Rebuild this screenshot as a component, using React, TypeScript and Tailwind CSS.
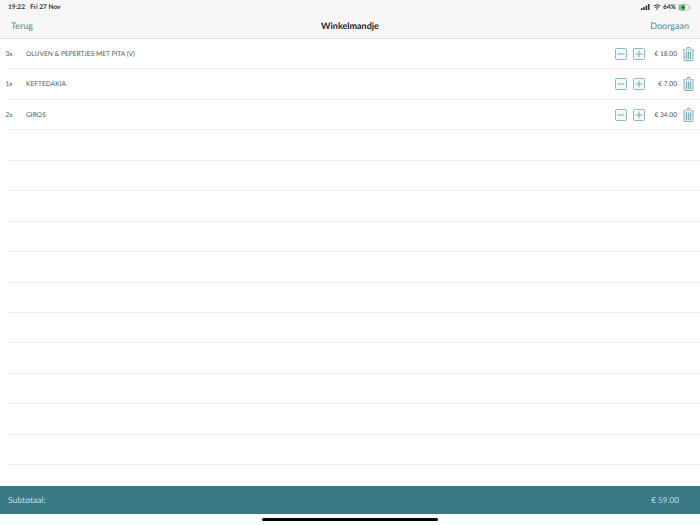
const rows = [
  { q: "3x", n: "OLIJVEN & PEPERTJES MET PITA (V)", p: "€ 18.00" },
  { q: "1x", n: "KEFTEDAKIA", p: "€ 7.00" },
  { q: "2x", n: "GIROS", p: "€ 34.00" },
  ...Array.from({ length: 11 }, () => ({ q: "", n: "", p: "" })),
];

function Box({ plus }: { plus?: boolean }) {
  return (
    <svg width="12" height="12" viewBox="0 0 12 12" fill="none" stroke="#8db8c1" strokeWidth="1" className="block">
      <rect x="0.5" y="0.5" width="11" height="11" rx="1" fill="#f4f8f9" />
      <path d={plus ? "M2.5 6H9.5M6 2.5V9.5" : "M2.5 6H9.5"} stroke="#7fabb5" />
    </svg>
  );
}

function Trash() {
  return (
    <svg width="11" height="14" viewBox="0 0 11 14" fill="none" stroke="#82b0ba" strokeWidth="1" className="block">
      <path d="M0.5 2.5H10.5M4 2.5V0.5H7V2.5" />
      <path d="M1 2.5V12.5Q1 13.5 2 13.5H9Q10 13.5 10 12.5V2.5" fill="#e6f0f2" />
      <path d="M3.5 4.5V12M5.5 4.5V12M7.5 4.5V12" strokeWidth="1.2" />
    </svg>
  );
}

export default function App() {
  return (
    <div className="relative flex h-[525px] w-[700px] flex-col overflow-hidden bg-white font-['Lato','Liberation_Sans',sans-serif] opacity-[0.999] [text-rendering:geometricPrecision]">
      <header className="h-[39px] shrink-0 border-b border-[#e3e3e3] bg-[#f7f7f7]">
        <div className="flex h-[13px] items-center justify-between pl-[8px] pr-[9px] pt-[1px] text-[6.6px] font-bold leading-none text-[#333]">
          <div className="flex gap-[5px]">
            <span>19:22</span>
            <span>Fri 27 Nov</span>
          </div>
          <div className="flex items-center gap-[2px]">
            <svg width="9" height="6" viewBox="0 0 9 6" fill="#333" className="block">
              <rect x="0" y="4" width="1.6" height="2" />
              <rect x="2.3" y="3" width="1.6" height="3" />
              <rect x="4.6" y="1.5" width="1.6" height="4.5" />
              <rect x="6.9" y="0" width="1.6" height="6" />
            </svg>
            <svg width="8" height="6" viewBox="0 0 8 6" fill="none" stroke="#333" className="ml-[1px] block">
              <path d="M0.5 2Q4 -0.5 7.5 2M2 3.5Q4 2 6 3.5" strokeWidth="1" />
              <circle cx="4" cy="5" r="0.8" fill="#333" stroke="none" />
            </svg>
            <span>64%</span>
            <svg width="13" height="7" viewBox="0 0 13 7" className="block">
              <rect x="0.5" y="0.5" width="10.5" height="6" rx="1.5" fill="#fff" stroke="#aaa" strokeWidth="0.6" />
              <rect x="1" y="1" width="6.5" height="5" rx="1" fill="#6fd16a" />
              <path d="M5.5 0.3L3.5 3.7H5L4.4 6.7L6.8 3H5.2Z" fill="#222" />
              <rect x="11.5" y="2.5" width="1" height="2" fill="#aaa" />
            </svg>
          </div>
        </div>
        <div className="relative flex h-[25px] items-center justify-between px-[11px] pt-[1px] text-[9px] text-[#4b8c99]">
          <span>Terug</span>
          <span className="absolute inset-x-0 text-center font-bold text-[#222]">Winkelmandje</span>
          <span>Doorgaan</span>
        </div>
      </header>
      <main className="flex-1">
        {rows.map((r, i) => (
          <div
            key={i}
            className="ml-[8px] flex h-[30.45px] items-center border-b border-[#eeeeee] pr-[6px] text-[6.65px] text-[#555]"
          >
            {r.n && (
              <>
                <span className="ml-[-2.5px] w-[20.5px] pt-[2px]">{r.q}</span>
                <span className="flex-1 pt-[2px]">{r.n}</span>
                <Box />
                <span className="ml-[6px]"><Box plus /></span>
                <span className="w-[32.5px] pt-[2px] text-right">{r.p}</span>
                <span className="ml-[6px]"><Trash /></span>
              </>
            )}
          </div>
        ))}
      </main>
      <footer className="mb-[11px] flex h-[28px] shrink-0 items-center justify-between bg-[#3a7a87] pl-[8px] pr-[21px] text-[8.6px] text-[#c5dce0]">
        <span>Subtotaal:</span>
        <span className="text-[8.2px]">€ 59.00</span>
      </footer>
      <div className="absolute left-[262px] top-[518px] h-[3px] w-[176px] rounded-full bg-black" />
    </div>
  );
}
